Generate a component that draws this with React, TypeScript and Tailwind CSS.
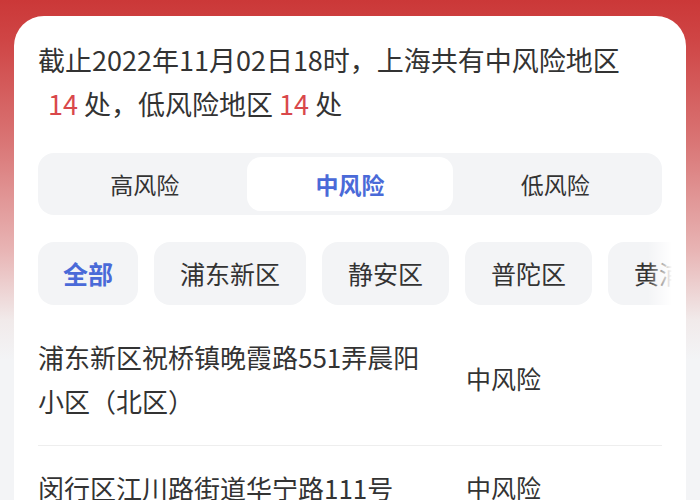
const tabs = ["高风险", "中风险", "低风险"]
const districts = ["全部", "浦东新区", "静安区", "普陀区", "黄浦区", "徐汇区"]
const areas = [
  { name: "浦东新区祝桥镇晚霞路551弄晨阳小区（北区）", level: "中风险" },
  { name: "闵行区江川路街道华宁路111号", level: "中风险" },
]

export default function App() {
  return (
    <div
      className="h-[500px] overflow-hidden bg-[linear-gradient(180deg,#cb3838_0px,#cf4545_40px,#d97474_140px,#e8b4b4_250px,#f1eaea_320px,#f3f4f6_360px)] px-[14px] pt-[16px] text-[#333]"
      style={{ fontFamily: '"Noto Sans CJK SC", "Noto Sans", sans-serif' }}
    >
      <div className="rounded-t-[30px] bg-white px-[24px] pt-[22px]">
        <p className="text-[27px] leading-[44px]">
          截止2022年11月02日18时，上海共有中风险地区
          <br />
          <span className="ml-[10px] text-[#d9484b]">14</span> 处，低风险地区{" "}
          <span className="text-[#d9484b]">14</span> 处
        </p>

        <div className="mt-[27px] flex h-[62px] rounded-[16px] bg-[#f3f4f6] p-[4px]">
          {tabs.map((t, i) => (
            <div
              key={t}
              className={
                i === 1
                  ? "flex flex-1 items-center justify-center rounded-[14px] bg-white text-[23px] font-bold text-[#4a6ad8]"
                  : "flex flex-1 items-center justify-center text-[23px] text-[#333]"
              }
            >
              {t}
            </div>
          ))}
        </div>

        <div className="relative -mr-[10px] mt-[27px] overflow-hidden">
          <div className="flex gap-[16px]">
            {districts.map((d, i) => (
              <div
                key={d}
                className={
                  i === 0
                    ? "flex h-[63px] shrink-0 items-center rounded-[16px] bg-[#f3f4f6] px-[25px] text-[25px] font-bold text-[#4a6ad8]"
                    : "flex h-[63px] shrink-0 items-center rounded-[16px] bg-[#f3f4f6] px-[26px] text-[25px] text-[#333]"
                }
              >
                {d}
              </div>
            ))}
          </div>
          <div className="absolute inset-y-0 right-0 w-[24px] bg-gradient-to-r from-white/0 to-white" />
        </div>

        <div className="mt-[30px]">
          {areas.map((a, i) => (
            <div
              key={a.name}
              className={
                i === 0
                  ? "flex items-center border-b border-[#eeeeee] pb-[22px]"
                  : "flex items-center pt-[20px]"
              }
            >
              <div className="w-[400px] text-[26px] leading-[44px]">{a.name}</div>
              <div className="ml-[28px] text-[25px]">{a.level}</div>
            </div>
          ))}
        </div>
      </div>
    </div>
  )
}
